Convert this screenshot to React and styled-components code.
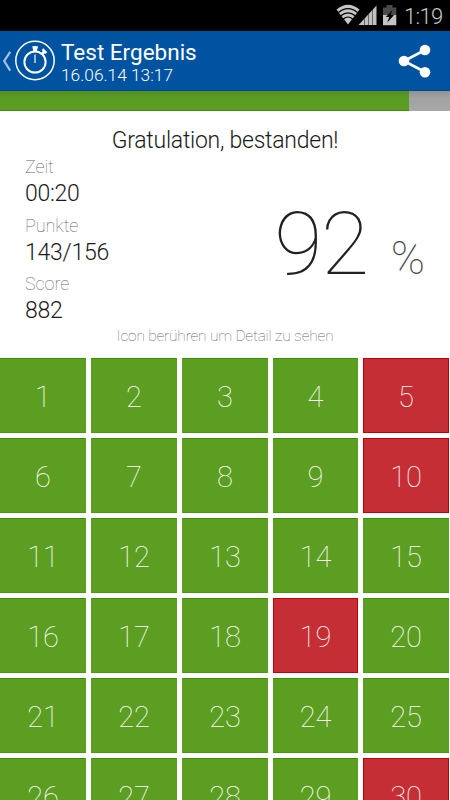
import React from 'react'
import styled, { createGlobalStyle } from 'styled-components'

const wrong = [5, 10, 19, 30]
const questions = Array.from({ length: 30 }, (_, i) => i + 1)

const stats = [
  { label: 'Zeit', value: '00:20' },
  { label: 'Punkte', value: '143/156' },
  { label: 'Score', value: '882' },
]

const StatusIcons = () => (
  <svg width="62" height="24" viewBox="0 0 62 24">
    {/* wifi */}
    <path d="M0.5 7.6Q12 -2.2 23.5 7.6L12 22.5Z" fill="#c6c6c6" />
    <g fill="none" stroke="#000" strokeWidth="1.2">
      <path d="M2.3 10.6Q12 2.6 21.7 10.6" />
      <path d="M4.8 13.8Q12 7.8 19.2 13.8" />
      <path d="M7.3 17Q12 13 16.7 17" />
    </g>
    {/* signal */}
    <path d="M22.5 23L40.5 3.5V23Z" fill="#c0c0c0" />
    <g stroke="#000" strokeOpacity="0.45" strokeWidth="1">
      <path d="M28.5 15V23M32.5 11V23M36.5 7V23" />
    </g>
    {/* battery */}
    <path d="M47 5.5H50.5V3H56.5V5.5H60.3V13H47Z" fill="#4a4a4a" />
    <path d="M47 13H60.3V23.2H47Z" fill="#c4c4c4" />
    <path d="M56.5 8L49.8 15H53.2L51.2 20.8L58 13H54.6Z" fill="#000" />
  </svg>
)

const BackIcon = () => (
  <svg width="10" height="22" viewBox="0 0 10 22">
    <path d="M8.2 1.8L2.2 11L8.2 20.6" fill="none" stroke="#a5c3e2" strokeWidth="2.2" />
  </svg>
)

const StopwatchIcon = () => (
  <svg width="42" height="42" viewBox="0 0 42 42" fill="none" stroke="#fff">
    <circle cx="21" cy="20.5" r="19.2" strokeWidth="1.5" />
    <circle cx="21" cy="22" r="10.6" strokeWidth="2" />
    <path d="M21 14.5V23" strokeWidth="1.2" />
    <path d="M18.5 7.4H23.8" strokeWidth="2.6" />
    <path d="M21.1 8V11.5" strokeWidth="4" />
    <path d="M27.8 14.2L30.4 11.6" strokeWidth="2.8" />
    <path d="M28.5 9.2L32.4 13.1" strokeWidth="2.4" />
  </svg>
)

const ShareIcon = () => (
  <svg width="34" height="36" viewBox="0 0 34 36" fill="#fff">
    <path d="M27 7L6 18L27 29" fill="none" stroke="#fff" strokeWidth="2.6" />
    <circle cx="27" cy="7" r="5.3" />
    <circle cx="6" cy="18" r="5.3" />
    <circle cx="27" cy="29.2" r="5.3" />
  </svg>
)

const App = () => (
  <Screen>
    <GlobalStyle />
    <StatusBar>
      <StatusIcons />
      <Clock>1:19</Clock>
    </StatusBar>
    <ActionBar>
      <HomeButton>
        <BackIcon />
        <StopwatchIcon />
      </HomeButton>
      <Titles>
        <Title>Test Ergebnis</Title>
        <Subtitle>16.06.14 13:17</Subtitle>
      </Titles>
      <ShareIcon />
    </ActionBar>
    <Progress>
      <ProgressFill />
    </Progress>
    <Summary>
      <Headline>Gratulation, bestanden!</Headline>
      <Result>
        <div>
          {stats.map(({ label, value }) => (
            <Stat key={label}>
              <Label>{label}</Label>
              <Value>{value}</Value>
            </Stat>
          ))}
        </div>
        <Score>
          <Percent>92</Percent>
          <PercentSign>%</PercentSign>
        </Score>
      </Result>
      <Hint>Icon berühren um Detail zu sehen</Hint>
    </Summary>
    <Grid>
      {questions.map(n => (
        <Tile key={n} $wrong={wrong.includes(n)}>{n}</Tile>
      ))}
    </Grid>
  </Screen>
)

export default App

const GlobalStyle = createGlobalStyle`
  body {
    margin: 0;
    background: #fff;
    font-family: Roboto, sans-serif;
  }
`

const Screen = styled.div`
  display: flex;
  flex-direction: column;
  width: 450px;
  height: 800px;
  overflow: hidden;
  background: #fff;
`

const StatusBar = styled.div`
  display: flex;
  flex: none;
  align-items: center;
  justify-content: flex-end;
  height: 31px;
  padding-right: 7px;
  box-sizing: border-box;
  background: #000;
  svg {
    margin-top: -3px;
  }
`

const Clock = styled.span`
  width: 39px;
  margin-left: 6.5px;
  padding-top: 2px;
  font-size: 22px;
  line-height: 29px;
  font-weight: 300;
  letter-spacing: -0.7px;
  color: #c8c8c8;
`

const ActionBar = styled.header`
  display: flex;
  flex: none;
  align-items: center;
  height: 60px;
  padding: 0 18px 0 2px;
  box-sizing: border-box;
  border-bottom: 1px solid #004a90;
  background: #0053a0;
  color: #fff;
`

const HomeButton = styled.div`
  display: flex;
  flex: none;
  align-items: center;
  gap: 2px;
`

const Titles = styled.div`
  flex: 1;
  margin-left: 5px;
  padding-top: 3px;
`

const Title = styled.div`
  font-size: 22.5px;
  line-height: 26px;
`

const Subtitle = styled.div`
  font-size: 17.3px;
  line-height: 21px;
  font-weight: 300;
`

const Progress = styled.div`
  flex: none;
  height: 20px;
  background: linear-gradient(#939393, #a3a3a3 35%, #a8a8a8);
`

const ProgressFill = styled.div`
  width: 409px;
  height: 20px;
  box-sizing: border-box;
  border-bottom: 1px solid #3c9407;
  background: linear-gradient(#528d20, #5a9c22 35%, #5c9e22);
`

const Summary = styled.section`
  flex: none;
  height: 247px;
  padding-top: 15px;
  box-sizing: border-box;
`

const Headline = styled.h1`
  margin: 0;
  font-size: 23px;
  line-height: 29px;
  font-weight: 300;
  letter-spacing: -0.25px;
  text-align: center;
  color: #1a1a1a;
`

const Result = styled.div`
  display: flex;
  justify-content: space-between;
  height: 171px;
  padding: 0 25px 0 25px;
`

const Stat = styled.div`
  height: 58.7px;
`

const Label = styled.div`
  font-size: 18px;
  line-height: 24px;
  font-weight: 100;
  letter-spacing: -0.1px;
  color: #666;
`

const Value = styled.div`
  font-size: 23px;
  line-height: 30.4px;
  font-weight: 300;
  letter-spacing: -0.25px;
  color: #1a1a1a;
`

const Score = styled.div`
  display: flex;
  align-items: baseline;
  padding-top: 37px;
`

const Percent = styled.span`
  font-size: 88px;
  line-height: 104px;
  font-weight: 100;
  letter-spacing: -1.5px;
  color: #222;
`

const PercentSign = styled.span`
  margin-left: 23px;
  font-size: 46px;
  font-weight: 100;
  color: #444;
`

const Hint = styled.div`
  font-size: 15.5px;
  line-height: 20px;
  font-weight: 100;
  letter-spacing: -0.2px;
  text-align: center;
  color: #666;
`

const Grid = styled.div`
  display: grid;
  grid-template-columns: repeat(3, 86px) 85px 86px;
  grid-auto-rows: 75px;
  gap: 5px;
  justify-content: start;
`

const Tile = styled.div`
  box-sizing: border-box;
  border: 1px solid ${p => (p.$wrong ? '#c00008' : '#5c9e22')};
  border-top-color: ${p => (p.$wrong ? '#c00008' : '#369400')};
  border-bottom-color: ${p => (p.$wrong ? '#c00008' : '#4a9a10')};
  background: ${p => (p.$wrong ? '#c52e35' : '#5c9e22')};
  font-size: 29px;
  line-height: 76px;
  font-weight: 100;
  text-align: center;
  color: #fff;
`
